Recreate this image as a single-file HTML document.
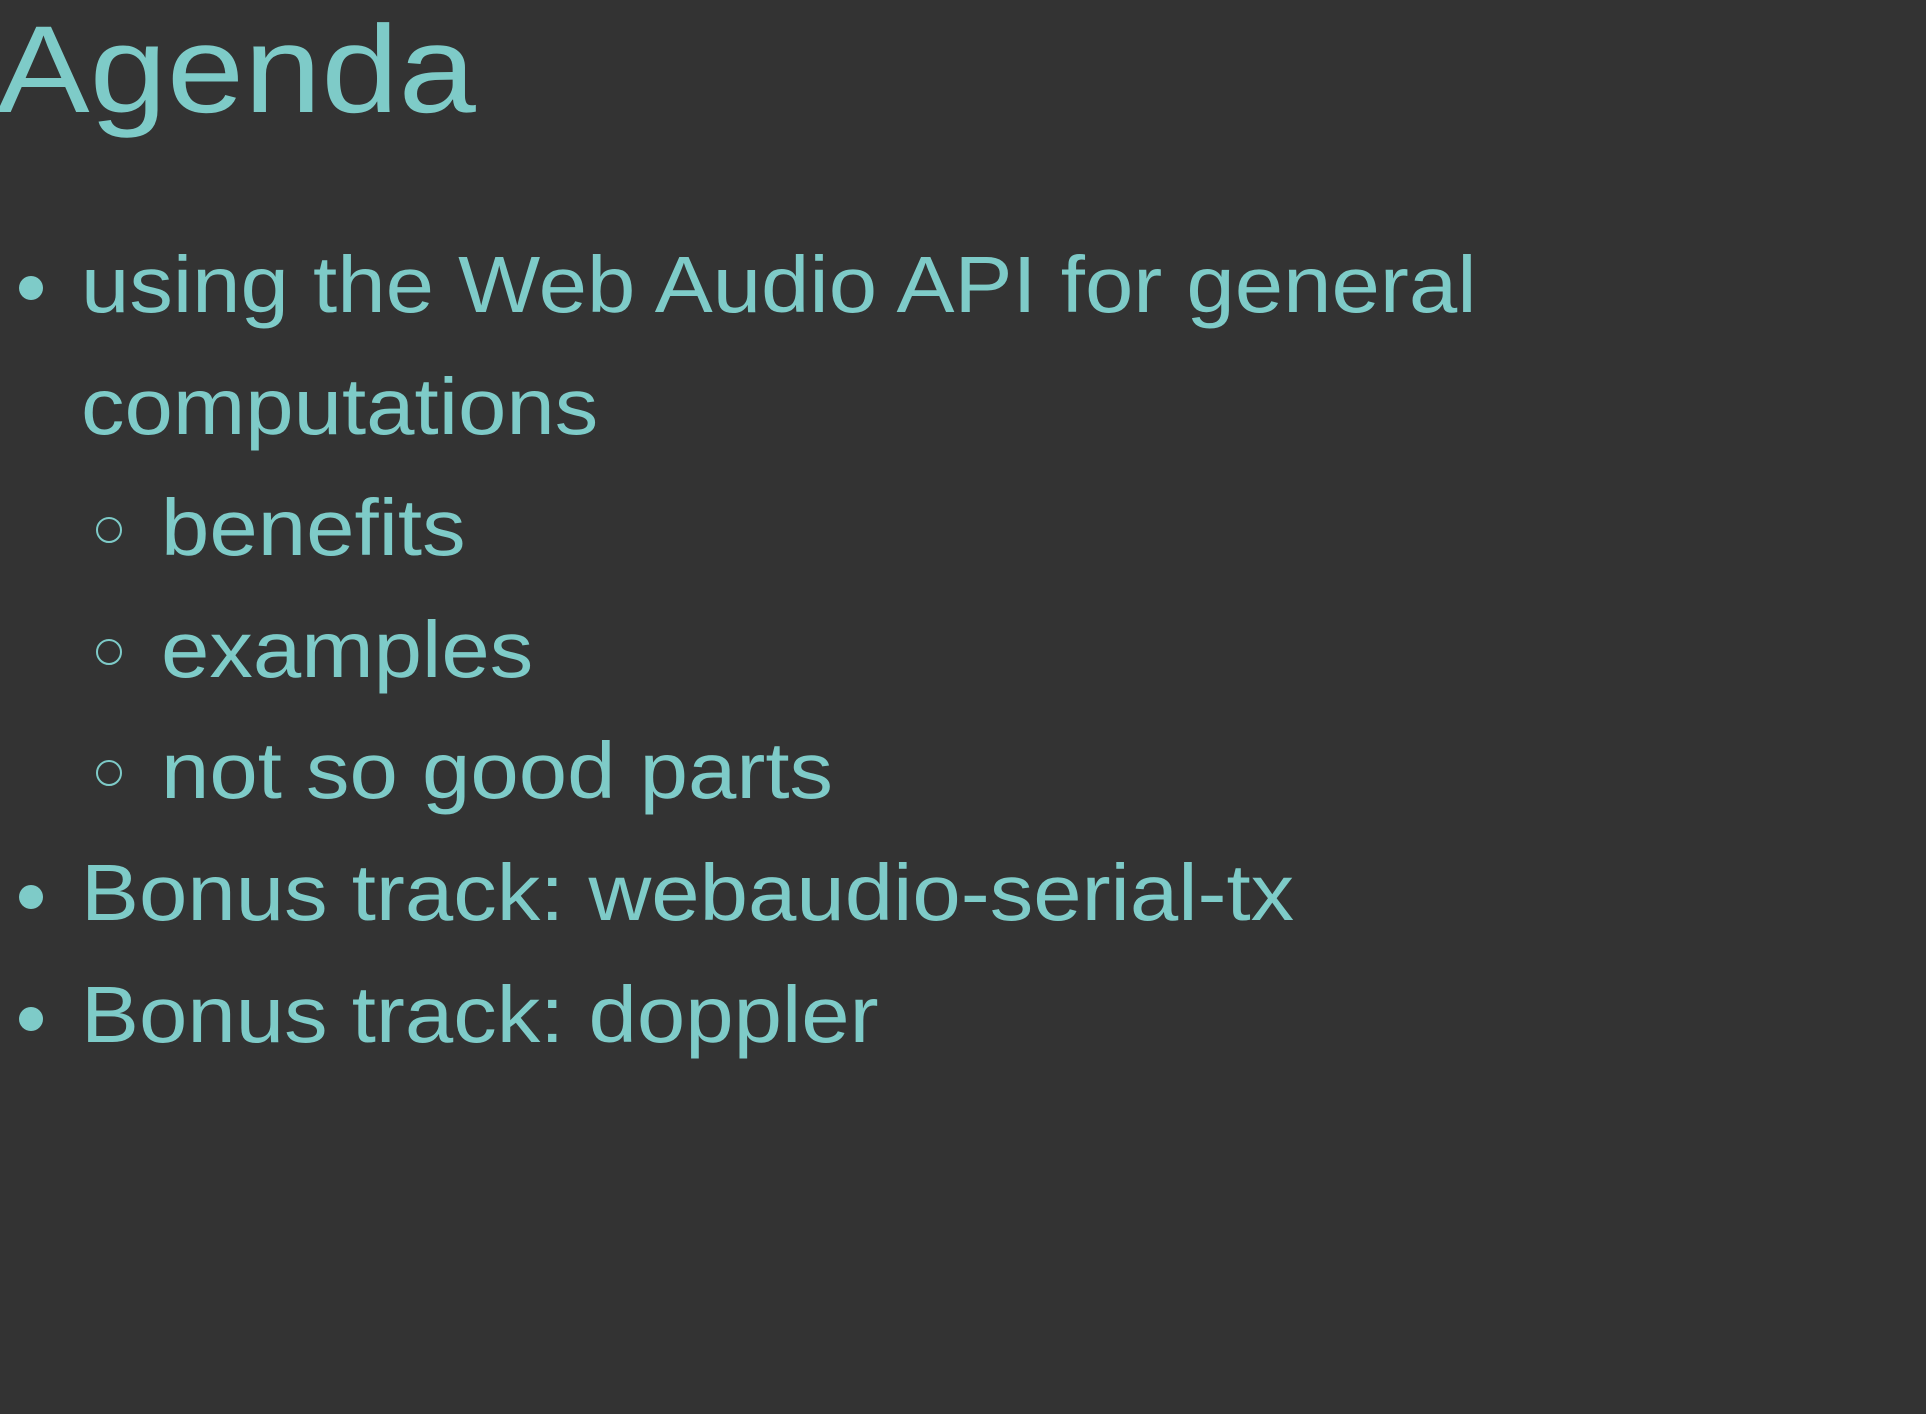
<!DOCTYPE html>
<html><head><meta charset="utf-8"><style>
html,body{margin:0;padding:0;background:#333333;width:1926px;height:1414px;overflow:hidden;}
.t{position:absolute;font-family:"Liberation Sans",sans-serif;color:#7ecbc8;line-height:1;white-space:nowrap;transform-origin:0 0;}
.h{font-size:124px;left:-3px;top:8px;transform:scaleX(1.12);}
.l{font-size:80px;transform:scaleX(1.087);}
.d{position:absolute;width:24px;height:24px;border-radius:50%;background:#7ecbc8;}
.c{position:absolute;width:26px;height:26px;border-radius:50%;border:2px solid #7ecbc8;box-sizing:border-box;}
</style></head><body>
<div class="t h">Agenda</div>

<div class="d" style="left:19px;top:276px"></div>
<div class="t l" style="left:81px;top:245px">using the Web Audio API for general</div>
<div class="t l" style="left:81px;top:367px">computations</div>

<div class="c" style="left:96px;top:517px"></div>
<div class="t l" style="left:161px;top:488px">benefits</div>
<div class="c" style="left:96px;top:639px"></div>
<div class="t l" style="left:161px;top:610px">examples</div>
<div class="c" style="left:96px;top:760px"></div>
<div class="t l" style="left:161px;top:731px">not so good parts</div>

<div class="d" style="left:19px;top:885px"></div>
<div class="t l" style="left:81px;top:853px">Bonus track: webaudio-serial-tx</div>
<div class="d" style="left:19px;top:1007px"></div>
<div class="t l" style="left:81px;top:975px">Bonus track: doppler</div>
</body></html>
